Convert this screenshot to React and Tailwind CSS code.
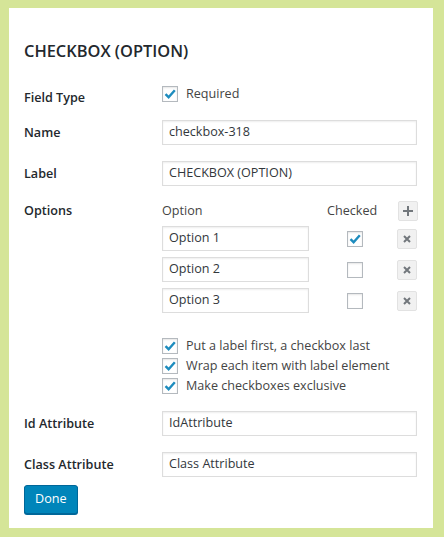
import React from "react";

const font = { fontFamily: "'Open Sans', 'Noto Sans', sans-serif" };

function Check({ checked }) {
    return (
        <span className="w-4 h-4 shrink-0 border border-[#b4b9be] bg-white shadow-[inset_0_1px_2px_rgba(0,0,0,0.1)] flex items-center justify-center">
            {checked && (
                <svg width="14" height="14" viewBox="0 0 14 14">
                    <path d="M2.5 7.2 L5.6 10.2 L11.8 3.2" fill="none" stroke="#1e8cbe" strokeWidth="2.4" />
                </svg>
            )}
        </span>
    );
}

function Input({ value, className = "w-[255px]" }) {
    return (
        <div className={`${className} h-[25px] border border-[#ddd] bg-white shadow-[inset_0_1px_2px_rgba(0,0,0,0.07)] px-[6px] flex items-center text-[12.6px] text-[#32373c]`}>
            {value}
        </div>
    );
}

function Row({ label, children, className = "" }) {
    return (
        <div className={`flex items-center ${className}`}>
            <div className="w-[138px] font-semibold text-[12.6px] text-[#23282d] pt-[2px]">{label}</div>
            {children}
        </div>
    );
}

function IconBtn({ children }) {
    return (
        <span className="w-5 h-5 bg-[#f1f1f1] border border-[#e2e2e2] rounded-[2px] flex items-center justify-center">
            {children}
        </span>
    );
}

export default function App() {
    const options = [
        { name: "Option 1", checked: true },
        { name: "Option 2", checked: false },
        { name: "Option 3", checked: false },
    ];

    return (
        <div className="w-[444px] h-[537px] bg-[#d5e598] pt-[8px] pl-[9px]" style={font}>
            <div className="w-[424px] h-[520px] bg-white pl-[15px] pr-[15px]">
                <h1 className="pt-[31px] text-[16.4px] font-semibold text-[#23282d] leading-[24px]">CHECKBOX (OPTION)</h1>

                <Row label="Field Type" className="mt-[25px] h-[18px]">
                    <div className="flex items-center gap-[8px] -mt-[6px] text-[12.6px] text-[#444]">
                        <Check checked />
                        <span>Required</span>
                    </div>
                </Row>

                <Row label="Name" className="mt-[14px]">
                    <Input value="checkbox-318" />
                </Row>

                <Row label="Label" className="mt-[16px]">
                    <Input value="CHECKBOX (OPTION)" />
                </Row>

                <div className="flex mt-[15px]">
                    <div className="w-[138px] font-semibold text-[12.6px] text-[#23282d] leading-[20px]">Options</div>
                    <div className="flex flex-col">
                        <div className="flex items-center h-5 text-[12.6px] text-[#444]">
                            <span className="w-[165px]">Option</span>
                            <span className="w-[71px]">Checked</span>
                            <IconBtn>
                                <svg width="12" height="12" viewBox="0 0 12 12">
                                    <path d="M6 1v10M1 6h10" stroke="#72777c" strokeWidth="2" />
                                </svg>
                            </IconBtn>
                        </div>
                        {options.map((o, i) => (
                            <div key={o.name} className={`flex items-center ${i === 0 ? "mt-[5px]" : "mt-[6px]"}`}>
                                <Input value={o.name} className="w-[147px]" />
                                <div className="w-[88px] flex justify-center pl-[4px]">
                                    <Check checked={o.checked} />
                                </div>
                                <IconBtn>
                                    <svg width="10" height="10" viewBox="0 0 10 10">
                                        <path d="M2 2l6 6M8 2l-6 6" stroke="#72777c" strokeWidth="2" />
                                    </svg>
                                </IconBtn>
                            </div>
                        ))}
                        <div className="flex flex-col mt-[25px] gap-[4px] text-[12.6px] text-[#444]">
                            {["Put a label first, a checkbox last", "Wrap each item with label element", "Make checkboxes exclusive"].map((t) => (
                                <label key={t} className="flex items-center gap-[8px] h-4">
                                    <Check checked />
                                    <span>{t}</span>
                                </label>
                            ))}
                        </div>
                    </div>
                </div>

                <Row label="Id Attribute" className="mt-[17px]">
                    <Input value="IdAttribute" />
                </Row>

                <Row label="Class Attribute" className="mt-[16px]">
                    <Input value="Class Attribute" />
                </Row>

                <button className="mt-[8px] h-[29px] px-[10px] bg-[#0085ba] border border-[#006799] rounded-[3px] text-white text-[12.6px] shadow-[0_1px_0_#006799]">
                    Done
                </button>
            </div>
        </div>
    );
}
